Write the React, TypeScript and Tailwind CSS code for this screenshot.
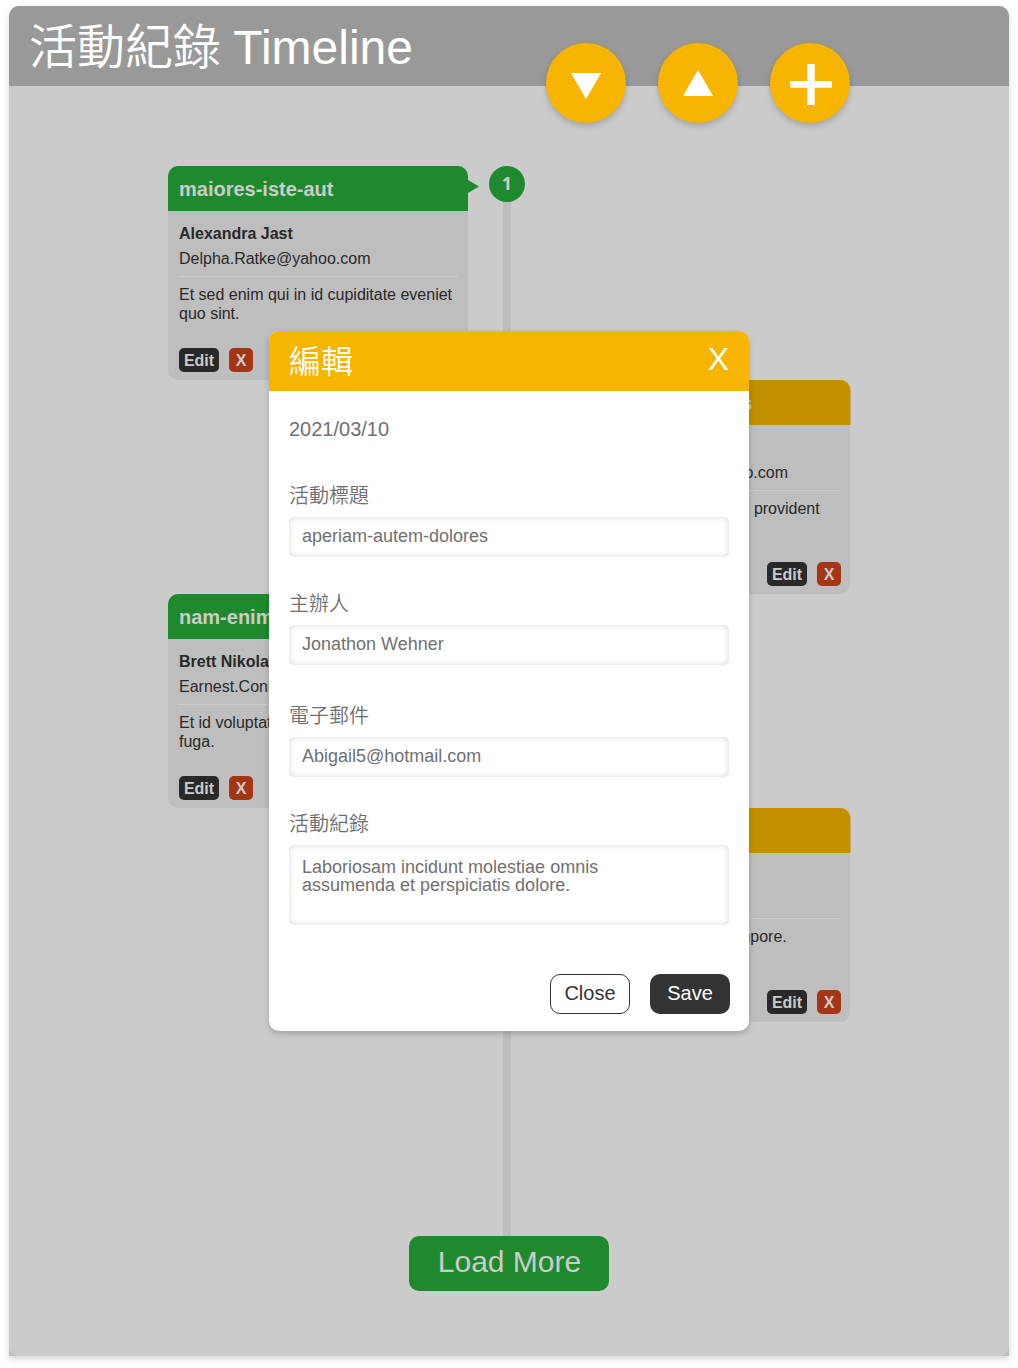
import React from "react";

type Entry = {
  title: string;
  name: string;
  email: string;
  lines: string[];
};

const leftEntries: Entry[] = [
  {
    title: "maiores-iste-aut",
    name: "Alexandra Jast",
    email: "Delpha.Ratke@yahoo.com",
    lines: ["Et sed enim qui in id cupiditate eveniet", "quo sint."],
  },
  {
    title: "nam-enim-quia",
    name: "Brett Nikolaus",
    email: "Earnest.Conn@yahoo.com",
    lines: ["Et id voluptatem sed", "fuga."],
  },
];

const rightEntries: Entry[] = [
  {
    title: "aut-doloribus-facilis",
    name: "Jonathon Kuhn",
    email: "Marguerite.Wisoky@yahoo.com",
    lines: ["Quia voluptatem sed animi provident", "quis."],
  },
  {
    title: "aperiam-autem",
    name: "Jonathon Wehner",
    email: "Abigail5@hotmail.com",
    lines: ["Quia voluptatem animi tempore."],
  },
];

function Card({ entry, side }: { entry: Entry; side: "left" | "right" }) {
  const left = side === "left";
  return (
    <article className="relative flex h-[214px] w-[300px] flex-col rounded-[10px] bg-[#bebebe] text-base text-[#292929]">
      <h2
        className={
          left
            ? "flex h-[45px] items-center rounded-t-[10px] bg-[#1e8a2d] pt-px pl-[11px] text-xl font-bold text-[#cbcbcb]"
            : "flex h-[45px] items-center rounded-t-[10px] bg-[#c49000] pt-px pl-[11px] text-xl font-bold text-[#cbcbcb] shadow-[1px_0_0_#c8ae66]"
        }
      >
        {entry.title}
      </h2>
      {left && (
        <svg className="absolute top-[14px] left-[300px]" width="11" height="14" viewBox="0 0 11 14">
          <path d="M0 0L11 6.6L0 13Z" fill="#1e8a2d" />
        </svg>
      )}
      <div className="flex flex-1 flex-col px-2.5 pt-[10px] pb-2">
        <div className="pl-px leading-[25px]">
          <p className="font-bold">{entry.name}</p>
          <p>{entry.email}</p>
        </div>
        <hr className="mt-[5px] border-t border-[#cbcbcb]" />
        <div className={left ? "mt-2 pl-px leading-[19px] whitespace-nowrap" : "mt-2 leading-[19px] whitespace-nowrap"}>
          {entry.lines.map((line) => (
            <p key={line}>{line}</p>
          ))}
        </div>
        <div
          className={
            left
              ? "mt-auto flex gap-2.5 pl-px font-bold text-[#cbcbcb]"
              : "mt-auto -mr-px flex justify-end gap-2.5 font-bold text-[#cbcbcb]"
          }
        >
          <button className="h-6 w-10 rounded-[5px] bg-[#292929] pt-0.5 leading-[22px]">Edit</button>
          <button className="h-6 w-6 rounded-[5px] bg-[#a43515] pt-0.5 leading-[22px]">X</button>
        </div>
      </div>
    </article>
  );
}

function RoundButton({ children }: { children: React.ReactNode }) {
  return (
    <button className="flex size-20 items-center justify-center rounded-full bg-[#f8b500] shadow-[0_3px_6px_rgba(0,0,0,0.2)]">
      <svg width="80" height="80" viewBox="0 0 80 80" fill="#fff">
        {children}
      </svg>
    </button>
  );
}

function Field({ label, value, className }: { label: string; value: string; className: string }) {
  return (
    <label className={className}>
      <span className="block pt-px text-xl leading-6 font-[350]">{label}</span>
      <span className="mt-[9px] flex h-10 items-center rounded-[5px] bg-white pb-0.5 pl-[13px] text-lg shadow-[inset_0_0_6px_rgba(0,0,0,0.16)]">
        {value}
      </span>
    </label>
  );
}

function EditDialog() {
  return (
    <div
      role="dialog"
      className="absolute top-[325px] left-[260px] flex h-[700px] w-[480px] flex-col rounded-[10px] bg-white text-[#707070] shadow-[0_3px_6px_rgba(0,0,0,0.2)]"
    >
      <div className="flex h-[60px] shrink-0 items-start justify-between rounded-t-[10px] bg-[#f8b500] px-5 text-[32px] text-white">
        <span className="leading-[62px] font-[350]">編輯</span>
        <button className="leading-[56px]">X</button>
      </div>
      <div className="flex flex-1 flex-col px-5 pt-[26px]">
        <p className="text-xl leading-6">2021/03/10</p>
        <Field className="mt-[42px]" label="活動標題" value="aperiam-autem-dolores" />
        <Field className="mt-[34px]" label="主辦人" value="Jonathon Wehner" />
        <Field className="mt-[38px]" label="電子郵件" value="Abigail5@hotmail.com" />
        <label className="mt-[34px]">
          <span className="block pt-px text-xl leading-6 font-[350]">活動紀錄</span>
          <span className="mt-[9px] block h-20 rounded-[5px] bg-white pt-[13px] pl-[13px] text-lg leading-[18px] shadow-[inset_0_0_6px_rgba(0,0,0,0.16)]">
            Laboriosam incidunt molestiae omnis
            <br />
            assumenda et perspiciatis dolore.
          </span>
        </label>
        <div className="mt-[49px] -mr-px flex justify-end gap-5 text-xl">
          <button className="h-10 w-20 rounded-[10px] border border-[#333] bg-white pb-0.5 text-[#333]">Close</button>
          <button className="h-10 w-20 rounded-[10px] bg-[#333] pb-0.5 text-white">Save</button>
        </div>
      </div>
    </div>
  );
}

export default function App() {
  return (
    <div className="h-[1368px] w-[1018px] bg-white px-[9px] pt-1.5 font-['Liberation_Sans','Noto_Sans_CJK_TC',sans-serif]">
      <div className="h-[1350px] rounded-t-[10px] bg-[#bfbfbf] shadow-[0_3px_6px_rgba(0,0,0,0.16)]">
        <main className="relative flex h-full flex-col rounded-[10px] bg-[#cbcbcb]">
          <header className="flex h-20 shrink-0 items-start justify-between rounded-t-[10px] bg-[#999] pr-[159px] pl-5">
            <h1 className="text-5xl leading-[84px] font-[350] whitespace-nowrap text-white">
              活動紀錄<span className="-ml-px"> Timeline</span>
            </h1>
            <div className="mt-[37px] flex gap-8">
              <RoundButton>
                <path d="M25 30H55L40 56Z" />
              </RoundButton>
              <RoundButton>
                <path d="M25 53H55L40 27Z" />
              </RoundButton>
              <RoundButton>
                <path d="M37.3 21H44.7V38H61.8V44.8H44.7V62H37.3V44.8H20.3V38H37.3Z" />
              </RoundButton>
            </div>
          </header>

          <section className="mt-20 flex h-[1070px] pl-[159px]">
            <div className="flex flex-col gap-[214px]">
              {leftEntries.map((e) => (
                <Card key={e.title} entry={e} side="left" />
              ))}
            </div>
            <div className="relative flex w-[78px] flex-col items-center">
              <span className="absolute inset-y-0 left-[35px] w-2 bg-[#bebebe]" />
              {[1, 2, 3, 4].map((n) => (
                <div key={n} className="relative h-[214px]">
                  <span className="flex size-9 items-center justify-center rounded-full bg-[#1e8a2d] pb-0.5 font-['Open_Sans'] text-lg leading-none font-bold text-[#cbcbcb]">
                    {n}
                  </span>
                </div>
              ))}
            </div>
            <div className="ml-1 flex flex-col gap-[214px] pt-[214px]">
              {rightEntries.map((e) => (
                <Card key={e.title} entry={e} side="right" />
              ))}
            </div>
          </section>

          <button className="h-[55px] w-[200px] self-center rounded-[10px] bg-[#1e8a2d] pb-[3px] pl-px text-[30px] leading-none text-[#cbcbcb]">
            Load More
          </button>

          <EditDialog />
        </main>
      </div>
    </div>
  );
}
